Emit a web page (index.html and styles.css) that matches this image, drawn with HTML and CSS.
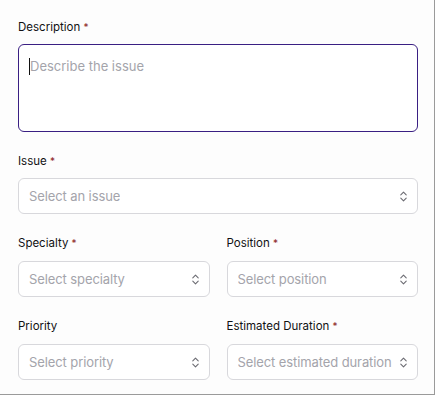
FILE: index.html
```html
<!DOCTYPE html>
<html lang="en">
<head>
  <meta charset="UTF-8" />
  <meta name="viewport" content="width=device-width, initial-scale=1.0" />
  <title>Report issue</title>
  <link rel="stylesheet" href="styles.css">
</head>
<body>
  <form class="panel">
    <div class="field">
      <label class="label">Description <span class="req">*</span></label>
      <div class="textarea focused"><span class="caret"></span><span class="ph">Describe the issue</span></div>
    </div>

    <div class="field">
      <label class="label">Issue <span class="req">*</span></label>
      <div class="select"><span class="ph">Select an issue</span><svg class="chev" viewBox="0 0 24 24"><path d="m7 15 5 5 5-5"/><path d="m7 9 5-5 5 5"/></svg></div>
    </div>

    <div class="row">
      <div class="field">
        <label class="label">Specialty <span class="req">*</span></label>
        <div class="select"><span class="ph">Select specialty</span><svg class="chev" viewBox="0 0 24 24"><path d="m7 15 5 5 5-5"/><path d="m7 9 5-5 5 5"/></svg></div>
      </div>
      <div class="field">
        <label class="label">Position <span class="req">*</span></label>
        <div class="select"><span class="ph">Select position</span><svg class="chev" viewBox="0 0 24 24"><path d="m7 15 5 5 5-5"/><path d="m7 9 5-5 5 5"/></svg></div>
      </div>
    </div>

    <div class="row">
      <div class="field">
        <label class="label">Priority</label>
        <div class="select"><span class="ph">Select priority</span><svg class="chev" viewBox="0 0 24 24"><path d="m7 15 5 5 5-5"/><path d="m7 9 5-5 5 5"/></svg></div>
      </div>
      <div class="field">
        <label class="label">Estimated Duration <span class="req">*</span></label>
        <div class="select"><span class="ph">Select estimated duration</span><svg class="chev" viewBox="0 0 24 24"><path d="m7 15 5 5 5-5"/><path d="m7 9 5-5 5 5"/></svg></div>
      </div>
    </div>
  </form>
</body>
</html>
```

FILE: styles.css
```css
body { margin: 0; background: #fff; font-family: Inter, "Noto Sans", sans-serif; color: #18181b; }
.panel { box-sizing: border-box; width: 435px; height: 395px; padding: 19px 16px 0 18px; background: #fdfdfd; border-right: 1px solid #9a9a9a; border-bottom: 1px solid #9a9a9a; display: flex; flex-direction: column; gap: 21px; }
.field { display: flex; flex-direction: column; min-width: 0; }
.label { display: block; font-size: 11.5px; line-height: 16px; font-weight: 400; margin-bottom: 9px; color: #111113; }
.row .label { margin-bottom: 10px; }
.req { color: #8c1c24; font-size: 10px; }
.textarea { height: 88px; box-sizing: border-box; border: 1px solid #3a1f83; border-radius: 6px; background: #fff; padding: 11px 10px; font-size: 13px; line-height: 20px; display: flex; align-items: flex-start; }
.caret { width: 1px; height: 17px; background: #111; margin-top: 2px; }
.ph { color: #a4a4ab; white-space: nowrap; overflow: hidden; }
.select { height: 36px; box-sizing: border-box; border: 1px solid #d8d8dc; border-radius: 6px; background: #fff; padding: 0 7px 0 10px; font-size: 13px; letter-spacing: -0.1px; display: flex; align-items: center; justify-content: space-between; gap: 2px; }
.chev { width: 13px; height: 13px; flex: none; fill: none; stroke: #6b6b72; stroke-width: 2; stroke-linecap: round; stroke-linejoin: round; }
.row { display: grid; grid-template-columns: 1fr 1fr; gap: 17px; }
```
